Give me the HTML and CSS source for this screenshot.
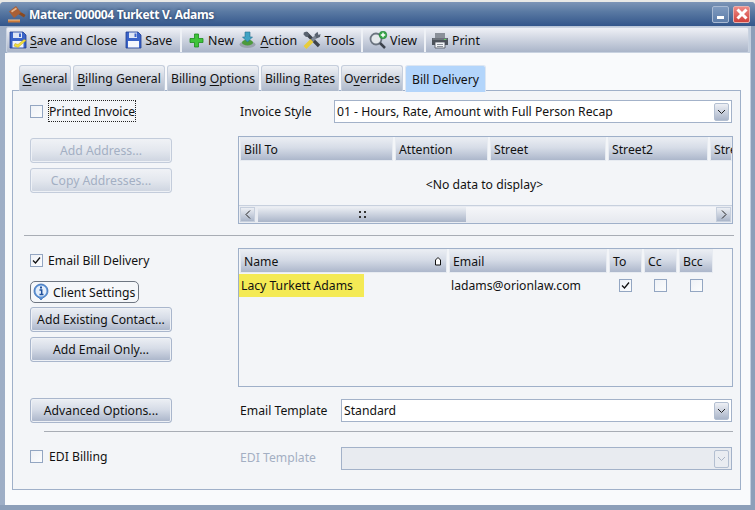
FILE: index.html
```html
<!DOCTYPE html>
<html lang="en">
<head>
<meta charset="utf-8">
<title>Matter: 000004 Turkett V. Adams</title>
<link rel="stylesheet" href="styles.css">
</head>
<body>
<div class="window">
  <header class="titlebar">
    <svg class="gavel" width="20" height="20" viewBox="0 0 20 20"><path d="M1 18.500h12V16H1z" fill="#c9793a"/><path d="M1 16h12" stroke="#f2c38f"/><path d="M8 8l9 5.500 1.500-2.500-9-5.500z" fill="#8a4a20"/><path d="M2 7.500L9 2l5 6.500-7 5.500z" fill="#a85f36"/><path d="M4 7l5-3.500 1 1.500-5 3.500z" fill="#e8b48a"/></svg>
    <span class="title">Matter: 000004 Turkett V. Adams</span>
    <span class="winbtn min"><i></i></span>
    <span class="winbtn close"><svg width="14" height="14" viewBox="0 0 14 14"><path d="M2.500 2.500l9 9M11.500 2.500l-9 9" stroke="#fff" stroke-width="3"/></svg></span>
  </header>
  <nav class="toolbar">
    <div class="tgroup g1">
      <span class="tool"><svg width="18" height="18" viewBox="0 0 18 18"><path d="M1 1h13l3 3v13H1z" fill="#3a63c8" stroke="#1e3d8f" stroke-width=".8"/><path d="M4 1.500h9v5.500H4z" fill="#dfe6f5"/><path d="M10 2.500h2v3.500h-2z" fill="#3a63c8"/><path d="M3.500 10h11v6.500h-11z" fill="#eef2fb"/><path d="M5 15l4 1.500 8-7-2-1-6 5-3-1z" fill="#f3df3c" stroke="#b9a21e" stroke-width=".5"/></svg><span><u>S</u>ave and Close</span></span>
      <span class="tool"><svg width="17" height="18" viewBox="0 0 17 18"><path d="M1 1h12l3 3v13H1z" fill="#3a63c8" stroke="#1e3d8f" stroke-width=".8"/><path d="M4 1.500h8v5.500H4z" fill="#dfe6f5"/><path d="M9.500 2.500h2v3.500h-2z" fill="#3a63c8"/><path d="M3 10h11v6.500H3z" fill="#f5f7fc"/></svg><span>Save</span></span>
    </div>
    <div class="tgroup g2">
      <span class="tool"><svg width="15" height="15" viewBox="0 0 15 15"><path d="M5.500 1h4v4.500H14v4H9.500V14h-4V9.500H1v-4h4.500z" fill="#3fc43a" stroke="#1d8a1d" stroke-width=".8"/></svg><span>New</span></span>
      <span class="tool"><svg width="17" height="18" viewBox="0 0 17 18"><ellipse cx="8.500" cy="13.500" rx="8" ry="3.500" fill="#9aa3ae"/><ellipse cx="8.500" cy="11.500" rx="5.500" ry="3" fill="#4c9a3c"/><path d="M6 1h5v5h2.500L8.500 11 3.500 6H6z" fill="#3fa3c4" stroke="#25718e" stroke-width=".6"/></svg><span><u>A</u>ction</span></span>
      <span class="tool"><svg width="18" height="18" viewBox="0 0 18 18"><path d="M3 2l13 13" stroke="#3d434c" stroke-width="3.400"/><path d="M2 16.500l7-7" stroke="#e8cd3a" stroke-width="4"/><path d="M9 9.500l5-5" stroke="#7f8894" stroke-width="3.400"/><path d="M11.500 3.500L14.500.8l1 3.200 2-1-.5 3-3.500 1.500z" fill="#59626f"/><path d="M.8 1.500L3.500.5l2.500 2.500-.6 2.400-2.400.6L.5 3.500z" fill="#59626f"/></svg><span>Tools</span></span>
    </div>
    <div class="tgroup g3">
      <span class="tool"><svg width="19" height="18" viewBox="0 0 19 18"><circle cx="7" cy="8" r="5.500" fill="#e4e8ec" stroke="#6b7480" stroke-width="1.800"/><path d="M11 12l5 5" stroke="#3d434c" stroke-width="2.500"/><circle cx="14" cy="4" r="3.800" fill="#3aa84a" stroke="#1d7a30" stroke-width=".6"/><path d="M14 1.800v4.400M11.800 4h4.400" stroke="#fff" stroke-width="1.400"/></svg><span>View</span></span>
    </div>
    <div class="tgroup g4">
      <span class="tool"><svg width="18" height="17" viewBox="0 0 18 17"><path d="M4 1h10v5H4z" fill="#8a9099"/><path d="M1 6h16v7H1z" fill="#4c525a"/><path d="M1.500 6h15v2h-15z" fill="#6d737c"/><path d="M4 10h10v6H4z" fill="#f2f4f7" stroke="#4c525a" stroke-width=".8"/><path d="M6 12.500h6M6 14.500h6" stroke="#8a9099"/><path d="M13 7.500h2" stroke="#5fd35f"/></svg><span>Print</span></span>
    </div>
  </nav>
  <main class="content">
    <div class="tabs">
      <span class="tab w52"><span><u>G</u>eneral</span></span>
      <span class="tab w92"><span><u>B</u>illing General</span></span>
      <span class="tab w92"><span>Billing <u>O</u>ptions</span></span>
      <span class="tab w78"><span>Billing <u>R</u>ates</span></span>
      <span class="tab w62"><span>O<u>v</u>errides</span></span>
      <span class="tab active">Bill Delivery</span>
    </div>
    <section class="panel">
      <div class="row row-a">
        <div class="left">
          <label class="check first"><span class="box"></span><span class="focus">Printed Invoice</span></label>
          <button class="btn dis a1">Add Address...</button>
          <button class="btn dis">Copy Addresses...</button>
        </div>
        <div class="right">
          <div class="field f1">
            <span class="flabel l94">Invoice Style</span>
            <div class="combo"><span class="val">01 - Hours, Rate, Amount with Full Person Recap</span><span class="drop"><svg width="9" height="6" viewBox="0 0 9 6"><path d="M1 1l3.500 3.500L8 1" fill="none" stroke="#222"/></svg></span></div>
          </div>
          <div class="grid g-top">
            <div class="ghead h1">
              <span class="hc">Bill To</span><span class="hc">Attention</span><span class="hc">Street</span><span class="hc">Street2</span><span class="hc clip">Stre</span>
            </div>
            <div class="empty">&lt;No data to display&gt;</div>
            <div class="scroll">
              <span class="sbtn"><svg width="6" height="9" viewBox="0 0 6 9"><path d="M5 .5l-4 4 4 4" fill="none" stroke="#222"/></svg></span>
              <span class="thumb"><svg width="7" height="7" viewBox="0 0 7 7"><path d="M0 0h2v2H0zM5 0h2v2H5zM0 5h2v2H0zM5 5h2v2H5z" fill="#333"/></svg></span>
              <span class="track"></span>
              <span class="sbtn"><svg width="6" height="9" viewBox="0 0 6 9"><path d="M1 .5l4 4-4 4" fill="none" stroke="#222"/></svg></span>
            </div>
          </div>
        </div>
      </div>
      <hr class="sep s1">
      <div class="row row-b">
        <div class="left">
          <label class="check second"><span class="box"><svg width="11" height="11" viewBox="0 0 11 11"><path d="M2 5.500l2.500 2.500L9 2.500" fill="none" stroke="#111" stroke-width="1.300"/></svg></span><span>Email Bill Delivery</span></label>
          <button class="btn client"><svg width="16" height="18" viewBox="0 0 16 18"><path d="M8 1a7 7 0 0 1 2 13.700L8 17l-2-2.300A7 7 0 0 1 8 1z" fill="#5b93d8" stroke="#2a5ea8" stroke-width=".7"/><circle cx="8" cy="8" r="5.500" fill="#e4eefa"/><path d="M8 3.500v2" stroke="#1f4f9a" stroke-width="2"/><path d="M6.500 7H8.700v4.500M6.500 11.500H10.500" fill="none" stroke="#1f4f9a" stroke-width="1.500"/></svg><span>Client Settings</span></button>
          <button class="btn">Add Existing Contact...</button>
          <button class="btn">Add Email Only...</button>
        </div>
        <div class="right">
          <div class="grid g-email">
            <div class="ghead h2">
              <span class="hc sort">Name<svg width="6" height="9" viewBox="0 0 6 9"><path d="M3 .5l2.500 2.500v5H.5V3z" fill="#fff" stroke="#111"/></svg></span><span class="hc">Email</span><span class="hc">To</span><span class="hc">Cc</span><span class="hc">Bcc</span>
            </div>
            <div class="grow h2">
              <span class="who"><mark>Lacy Turkett Adams</mark></span>
              <span class="mail">ladams@orionlaw.com</span>
              <span class="cbc"><span class="box"><svg width="11" height="11" viewBox="0 0 11 11"><path d="M2 5.500l2.500 2.500L9 2.500" fill="none" stroke="#111" stroke-width="1.300"/></svg></span></span>
              <span class="cbc"><span class="box"></span></span>
              <span class="cbc"><span class="box"></span></span>
            </div>
          </div>
        </div>
      </div>
      <div class="row row-c">
        <div class="left"><button class="btn">Advanced Options...</button></div>
        <div class="right">
          <div class="field">
            <span class="flabel l101">Email Template</span>
            <div class="combo"><span class="val">Standard</span><span class="drop"><svg width="9" height="6" viewBox="0 0 9 6"><path d="M1 1l3.500 3.500L8 1" fill="none" stroke="#222"/></svg></span></div>
          </div>
        </div>
      </div>
      <hr class="sep s2">
      <div class="row row-d">
        <div class="left"><label class="check third"><span class="box"></span><span>EDI Billing</span></label></div>
        <div class="right">
          <div class="field">
            <span class="flabel l101 muted">EDI Template</span>
            <div class="combo off"><span class="val"></span><span class="drop"><svg width="9" height="6" viewBox="0 0 9 6"><path d="M1 1l3.500 3.500L8 1" fill="none" stroke="#a9b4c6"/></svg></span></div>
          </div>
        </div>
      </div>
    </section>
  </main>
</div>
</body>
</html>
```
FILE: styles.css
```css
* { box-sizing: border-box; }
html, body { margin: 0; padding: 0; }
body {
  width: 755px; height: 510px; overflow: hidden; background: #e9e9e6;
  font-family: "Noto Sans", "Open Sans", sans-serif; font-size: 12.2px; color: #111;
  padding-top: 2px;
}
svg { display: block; flex: none; }
u { text-decoration: underline; text-underline-offset: 2px; }

.window {
  height: 508px; display: flex; flex-direction: column;
  background: linear-gradient(90deg, #9eaec6, #c3cede);
  border-radius: 4px 4px 0 0;
  padding: 0 5px 5px;
  border-bottom: 0;
  box-shadow: inset 0 -5px 0 #8d9fb9, inset -4px 0 0 #8d9fb9;
}
.titlebar {
  margin: 0 -5px; height: 24px; flex: none; padding: 0 5px 0 7px;
  display: flex; align-items: center;
  background: linear-gradient(#7d95b7, #5a7aa3 40%, #33568b);
  border-radius: 4px 4px 0 0;
}
.gavel { margin-right: 2px; }
.title { color: #fff; font-weight: 700; font-size: 12px; letter-spacing: -.3px; flex: 1; text-shadow: 0 0 3px #23395f; }
.winbtn { width: 17px; height: 17px; border-radius: 2px; display: flex; align-items: center; justify-content: center; margin-left: 4px; border: 1px solid #a9bad3; }
.min { background: linear-gradient(#7f9abf, #5d7da9); position: relative; }
.min i { display: block; width: 7px; height: 3px; background: #fff; margin-top: 7px; }
.close { background: linear-gradient(#ee8a85, #d0413c); border-color: #e8b0ad; margin-right: 0; }

.toolbar {
  height: 26px; flex: none; margin: 1px 1px 0; display: flex; font-size: 12.4px;
  background: linear-gradient(#eff1f6, #aab5c9);
  border: 1px solid #c9d2e0; border-radius: 2px;
}
.tgroup { display: flex; align-items: center; gap: 8px; padding-left: 2px; border-right: 2px solid #eef1f6; }
.tgroup.g1 { width: 175px; }
.tgroup.g2 { width: 181px; padding-left: 7px; gap: 5.500px; }
.tgroup.g2 .tool { gap: 4px; }
.tgroup.g3 { width: 63px; padding-left: 6px; }
.tgroup.g3 .tool { gap: 2px; }
.tgroup.g4 { border-right: 0; padding-left: 5px; }
.tool { display: flex; align-items: center; gap: 3px; white-space: nowrap; }

.content { flex: 1; background: #f9fafc; padding: 12px 9px 0 7px; min-height: 0; }
.tabs { display: flex; height: 26px; padding-left: 7px; gap: 2px; position: relative; z-index: 1; }
.tab {
  height: 26px; display: flex; align-items: center; justify-content: center; white-space: nowrap;
  background: linear-gradient(#eff1f5, #aeb9cb);
  border: 1px solid #c5cedc; border-bottom: 0; border-radius: 3px 3px 0 0;
}
.w52 { width: 52px; } .w92 { width: 92px; } .w78 { width: 78px; } .w62 { width: 62px; margin-left: 0; }
.tab.active { width: 81px; background: #b3d5fb; border-color: #dde6f2; height: 27px; }
.panel {
  height: 400px; margin-top: -1px; background: #f3f5f8;
  border: 1px solid #9fb0c9; padding: 9px 7px 0 17px;
}
.row { display: flex; }
.left { width: 208px; flex: none; display: flex; flex-direction: column; align-items: flex-start; }
.right { flex: 1; min-width: 0; }
.row-a { height: 125px; }
.row-b { height: 138px; margin-top: 12px; }
.row-c { margin-top: 12px; height: 25px; }
.row-d { margin-top: 15px; }

.check { display: flex; align-items: center; gap: 5px; height: 20px; white-space: nowrap; }
.box { width: 13px; height: 13px; border: 1px solid #93a6c2; background: linear-gradient(135deg, #eef1f6, #fbfcfd); display: flex; align-items: center; justify-content: center; flex: none; }
.focus { outline: 1px dotted #222; outline-offset: 0; padding: 0; height: 20px; display: flex; align-items: center; }
.check.first { margin-top: 1px; gap: 6px; }
.check.second { margin-top: 2px; }
.check.third { margin-top: -1px; gap: 6px; }

.btn {
  width: 142px; height: 25px; font: inherit; color: #111; padding: 0;
  background: linear-gradient(#eceff4, #d6dce7 45%, #a9b4c9);
  border: 1px solid #a9b6cc; border-radius: 3px; box-shadow: inset 0 0 0 1px #eef1f6;
  display: flex; align-items: center; justify-content: center; white-space: nowrap;
}
.btn + .btn { margin-top: 5px; }
.btn.a1 { margin-top: 17px; }
.check + .btn.a1 { margin-top: 17px; }
.btn.dis { color: #a3afc3; background: linear-gradient(#f0f2f6, #e3e7ee 50%, #cdd4e0); border-color: #c3ccdb; }
.btn.client {
  width: 109px; height: 22px; margin-top: 11px; gap: 4px; justify-content: flex-start; padding-left: 2px;
  background: #f5f7fa; border: 1px solid #6e7682; border-radius: 5px; box-shadow: none;
}
.btn.client + .btn { margin-top: 4px; }
.row-c .btn { margin-top: 0; }

.field { display: flex; align-items: center; height: 23px; }
.f1 { margin-top: 0; }
.flabel { flex: none; margin-left: 2px; }
.l94 { width: 94px; }
.l101 { width: 101px; }
.muted { color: #a3afc3; padding-bottom: 2px; }
.combo {
  flex: 1; height: 23px; background: #fff; border: 1px solid #a3b2c9; display: flex; align-items: center;
  padding: 0 2px 0 2px; justify-content: space-between; margin-right: 1px;
}
.combo.off { background: #e8ebf0; }
.drop {
  width: 15px; height: 18px; border: 1px solid #b3bfd1; border-radius: 2px;
  background: linear-gradient(#eef0f5, #aab5c9); display: flex; align-items: center; justify-content: center;
}
.off .drop { background: #e9ecf1; }
.row-d .field { margin-top: 0; }
.row-c .field { margin-top: 1px; }

.grid { border: 1px solid #9fb0c9; background: #f3f5f8; }
.g-top { height: 88px; margin-top: 13px; display: flex; flex-direction: column; overflow: hidden; }
.g-email { height: 139px; }
.ghead, .grow { display: grid; column-gap: 2px; padding-left: 1px; }
.ghead.h1 { grid-template-columns: 153px 93px 116px 100px 22px; overflow: hidden; }
.h2 { grid-template-columns: 207px 158px 33px 33px 34px; }
.hc {
  height: 24px; display: flex; align-items: center; padding-left: 4px; white-space: nowrap; overflow: hidden;
  background: linear-gradient(#eceff4, #d6dce7 45%, #a9b4c9);
  box-shadow: inset 0 0 0 1px #e7ebf1;
}
.hc.sort { justify-content: space-between; padding-right: 6px; }
.empty { flex: 1; display: flex; align-items: center; justify-content: center; padding: 2px 2px 0 0; }
.scroll { height: 18px; flex: none; display: flex; padding: 1px 1px 1px 1px; background: #e9ecf2; border-top: 1px solid #c7d0de; }
.sbtn { width: 15px; flex: none; display: flex; align-items: center; justify-content: center; background: linear-gradient(#eceff4, #aab5c9); border: 1px solid #c6cfdd; }
.thumb { width: 208px; margin-left: 3px; display: flex; align-items: center; justify-content: center; background: linear-gradient(#eceff4, #aab5c9); }
.track { flex: 1; background: linear-gradient(#f5f6f9, #e6e9ef); }
.grow { height: 23px; align-items: stretch; padding-left: 0; margin-top: 1px; }
.grow.h2 { grid-template-columns: 208px 158px 33px 33px 34px; }
.who mark { display: flex; align-items: center; width: 125px; height: 23px; background: #f4ea55; color: #111; padding-left: 2px; white-space: nowrap; }
.mail { display: flex; align-items: center; padding-left: 2px; white-space: nowrap; }
.cbc { display: flex; align-items: center; justify-content: center; }

.sep { border: 0; border-top: 1px solid #a8adb5; height: 0; margin: 0; }
.s1 { margin: 10px 0 0 -6px; width: 710px; }
.s2 { margin: 8px 0 0 14px; width: 689px; }
```
